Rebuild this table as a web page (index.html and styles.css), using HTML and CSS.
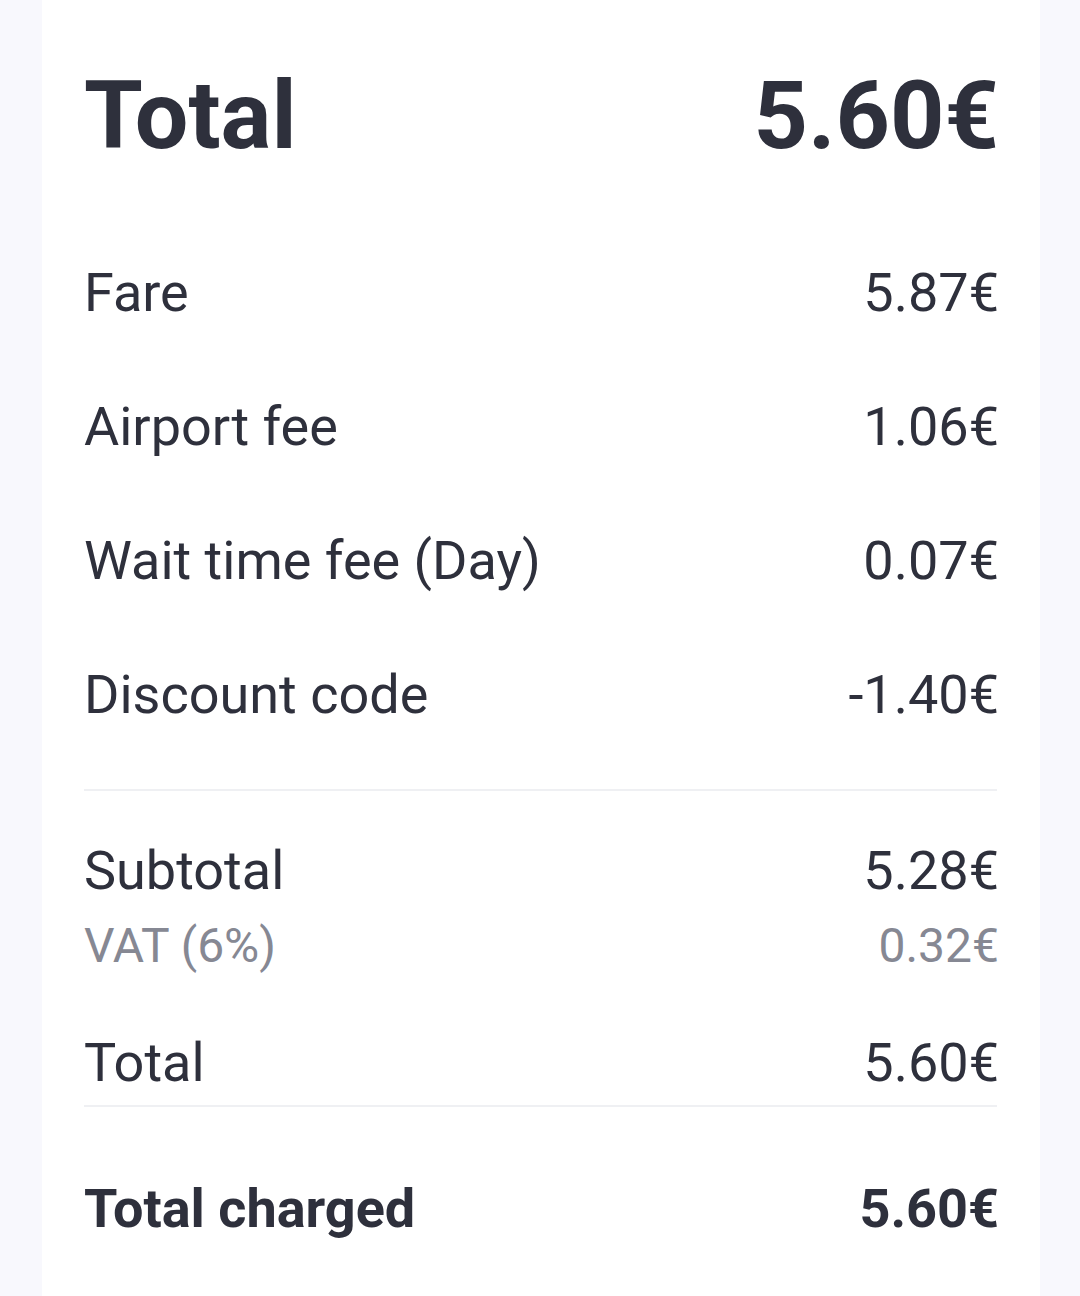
FILE: index.html
```html
<!DOCTYPE html>
<html lang="en">
<head>
<meta charset="utf-8">
<title>Receipt</title>
<link rel="stylesheet" href="styles.css">
</head>
<body>
<main class="card">
  <header class="summary">
    <span>Total</span>
    <span>5.60€</span>
  </header>
  <ul class="items">
    <li class="row"><span>Fare</span><span>5.87€</span></li>
    <li class="row"><span>Airport fee</span><span>1.06€</span></li>
    <li class="row"><span>Wait time fee (Day)</span><span>0.07€</span></li>
    <li class="row"><span>Discount code</span><span>-1.40€</span></li>
  </ul>
  <hr class="divider divider-items">
  <div class="line subtotal"><span>Subtotal</span><span>5.28€</span></div>
  <div class="line vat"><span>VAT (6%)</span><span>0.32€</span></div>
  <div class="line total"><span>Total</span><span>5.60€</span></div>
  <hr class="divider divider-total">
  <div class="line charged"><span>Total charged</span><span>5.60€</span></div>
</main>
</body>
</html>
```

FILE: styles.css
```css
html, body {
  margin: 0;
  padding: 0;
}
body {
  background: #f8f8fd;
  font-family: Roboto, "Noto Sans", "Liberation Sans", sans-serif;
  color: #2e303c;
}
.card {
  margin-left: 42px;
  width: 998px;
  min-height: 1296px;
  box-sizing: border-box;
  background: #ffffff;
  padding: 60px 41px 0 42px;
}
.summary {
  display: flex;
  justify-content: space-between;
  font-size: 95px;
  line-height: 112px;
  font-weight: 700;
  margin-bottom: 54px;
}
.items {
  list-style: none;
  margin: 0;
  padding: 0;
}
.row, .line {
  display: flex;
  justify-content: space-between;
  font-size: 54px;
  line-height: 64px;
}
.row {
  padding-top: 35px;
  padding-bottom: 35px;
}
.divider {
  border: 0;
  margin: 0 2px 0 0;
  height: 2px;
  background: #eff0f3;
}
.divider-items {
  margin-top: 27px;
}
.subtotal {
  margin-top: 48px;
}
.vat {
  margin-top: 15px;
  font-size: 48px;
  line-height: 56px;
  color: #868893;
}
.total {
  margin-top: 57px;
}
.divider-total {
  margin-top: 10px;
}
.charged {
  margin-top: 70px;
  font-weight: 700;
}
```
